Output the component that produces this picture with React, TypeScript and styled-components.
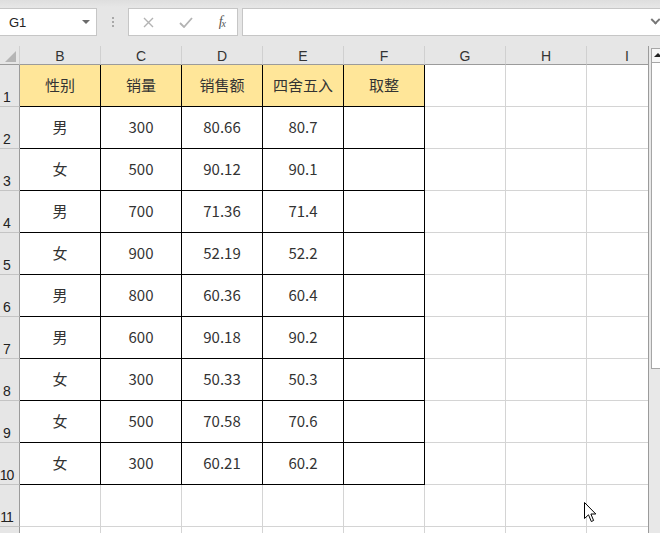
import styled, { createGlobalStyle } from "styled-components";

const GlobalStyle = createGlobalStyle`
  html, body {
    margin: 0;
    padding: 0;
    background: #ffffff;
    overflow: hidden;
  }
  body {
    font-family: "Noto Sans CJK SC", "Noto Sans", sans-serif;
  }
`;

const COLS = ["B", "C", "D", "E", "F", "G", "H", "I"];
const HEADERS = ["性别", "销量", "销售额", "四舍五入", "取整"];
const DATA = [
  ["男", "300", "80.66", "80.7"],
  ["女", "500", "90.12", "90.1"],
  ["男", "700", "71.36", "71.4"],
  ["女", "900", "52.19", "52.2"],
  ["男", "800", "60.36", "60.4"],
  ["男", "600", "90.18", "90.2"],
  ["女", "300", "50.33", "50.3"],
  ["女", "500", "70.58", "70.6"],
  ["女", "300", "60.21", "60.2"],
];

const Window = styled.div`
  position: relative;
  width: 660px;
  height: 533px;
  overflow: hidden;
  background: #e6e6e6;
`;

const FormulaBar = styled.div`
  height: 46px;
  display: flex;
  align-items: flex-start;
  padding-top: 8px;
  box-sizing: border-box;
  background: linear-gradient(#dedede 0px, #e6e6e6 7px);
`;

const NameBox = styled.div`
  width: 97px;
  height: 28px;
  box-sizing: border-box;
  background: #fff;
  border: 1px solid #c6c6c6;
  border-left: none;
  display: flex;
  align-items: center;
  justify-content: space-between;
  padding: 0 6px 0 9px;
  font-family: "Liberation Sans", sans-serif;
  font-size: 13px;
  color: #222;
`;

const Caret = styled.span`
  width: 0;
  height: 0;
  border-left: 4px solid transparent;
  border-right: 4px solid transparent;
  border-top: 4px solid #6b6b6b;
`;

const Grip = styled.div`
  width: 31px;
  height: 28px;
  display: flex;
  flex-direction: column;
  align-items: center;
  justify-content: center;
  gap: 2px;
  span {
    width: 2px;
    height: 2px;
    background: #a8a8a8;
  }
`;

const ButtonBox = styled.div`
  width: 110px;
  height: 28px;
  box-sizing: border-box;
  background: #fff;
  border: 1px solid #c6c6c6;
  display: flex;
  align-items: center;
  padding: 0 12px 0 14px;
  justify-content: space-between;
`;

const Fx = styled.span`
  font-family: "Liberation Serif", serif;
  font-style: italic;
  font-size: 14px;
  color: #555;
  letter-spacing: -1px;
  sub {
    font-size: 10px;
    vertical-align: -1px;
  }
`;

const Input = styled.div`
  flex: 1;
  margin-left: 4px;
  height: 28px;
  box-sizing: border-box;
  background: #fff;
  border: 1px solid #c6c6c6;
  border-right: none;
  display: flex;
  align-items: center;
  justify-content: flex-end;
  padding-right: 1px;
`;

const Chevron = styled.span`
  width: 5px;
  height: 5px;
  border-right: 2px solid #777;
  border-bottom: 2px solid #777;
  transform: rotate(45deg) translate(-2px, -2px);
`;

const Sheet = styled.div`
  display: flex;
  height: 487px;
`;

const Grid = styled.div`
  display: grid;
  grid-template-columns: 20px repeat(8, 81px);
  grid-template-rows: 19px repeat(12, 42px);
  width: 648px;
  flex: none;
  overflow: hidden;
  background: #fff;
  border-right: 1px solid #9b9b9b;
  align-content: start;
`;

const Corner = styled.div`
  background: #e6e6e6;
  border-right: 1px solid #d0d0d0;
  border-bottom: 1px solid #9b9b9b;
  box-sizing: border-box;
  position: relative;
  &::after {
    content: "";
    position: absolute;
    right: 3px;
    bottom: 2px;
    border-left: 11px solid transparent;
    border-bottom: 11px solid #b5b5b5;
  }
`;

const ColHead = styled.div`
  background: #e6e6e6;
  border-right: 1px solid #d0d0d0;
  border-bottom: 1px solid #9b9b9b;
  box-sizing: border-box;
  display: flex;
  align-items: flex-end;
  justify-content: center;
  font-family: "Liberation Sans", sans-serif;
  font-size: 14px;
  line-height: 16px;
  color: #333;
`;

const RowHead = styled.div`
  background: #e6e6e6;
  border-right: 1px solid #9b9b9b;
  border-bottom: 1px solid #c4c4c4;
  box-sizing: border-box;
  display: flex;
  align-items: flex-end;
  justify-content: center;
  padding-right: 6px;
  overflow: visible;
  white-space: nowrap;
  font-family: "Liberation Sans", sans-serif;
  font-size: 14px;
  letter-spacing: -1px;
  line-height: 18px;
  color: #222;
`;

const Cell = styled.div<{ $kind: "head" | "data" | "empty" }>`
  box-sizing: border-box;
  background: ${(p) => (p.$kind === "head" ? "#ffe699" : "#ffffff")};
  border-right: 1px solid ${(p) => (p.$kind === "empty" ? "#d4d4d4" : "#000")};
  border-bottom: 1px solid ${(p) => (p.$kind === "empty" ? "#d4d4d4" : "#000")};
  display: flex;
  align-items: center;
  justify-content: center;
  font-family: "Noto Sans CJK SC", sans-serif;
  font-size: 15px;
  color: #333;
  padding-bottom: 2px;
`;

const Scrollbar = styled.div`
  flex: 1;
  background: #e8e8e8;
  padding: 2px 0 0 2px;
  display: flex;
  flex-direction: column;
`;

const ScrollButton = styled.div`
  height: 15px;
  box-sizing: border-box;
  background: #f7f7f7;
  border: 1px solid #a6a6a6;
  border-right: none;
  position: relative;
  &::after {
    content: "";
    position: absolute;
    left: 2px;
    top: 4px;
    border-left: 4px solid transparent;
    border-right: 4px solid transparent;
    border-bottom: 4px solid #222;
  }
`;

const Thumb = styled.div`
  height: 306px;
  box-sizing: border-box;
  background: #ffffff;
  border: 1px solid #a6a6a6;
  border-right: none;
  border-top: none;
`;

const Pointer = styled.svg`
  position: absolute;
  left: 584px;
  top: 502px;
`;

function FormulaRow() {
  return (
    <FormulaBar>
      <NameBox>
        G1
        <Caret />
      </NameBox>
      <Grip>
        <span />
        <span />
        <span />
      </Grip>
      <ButtonBox>
        <svg width="11" height="11" viewBox="0 0 11 11">
          <path d="M1 1 L10 10 M10 1 L1 10" stroke="#b3b3b3" strokeWidth="1.4" />
        </svg>
        <svg width="14" height="11" viewBox="0 0 14 11">
          <path d="M1 6 L5 10 L13 1" stroke="#b3b3b3" strokeWidth="1.8" fill="none" />
        </svg>
        <Fx>
          f<sub>x</sub>
        </Fx>
      </ButtonBox>
      <Input>
        <Chevron />
      </Input>
    </FormulaBar>
  );
}

export default function App() {
  const bodyRows: React.ReactNode[] = [];
  for (let r = 1; r <= 12; r++) {
    // row 12 only peeks in at the bottom edge, its number is below the fold
    bodyRows.push(<RowHead key={`rh${r}`}>{r < 12 ? r : ""}</RowHead>);
    COLS.forEach((c, i) => {
      if (r === 1 && i < 5) {
        bodyRows.push(
          <Cell key={`${c}${r}`} $kind="head">
            {HEADERS[i]}
          </Cell>
        );
      } else if (r >= 2 && r <= 10 && i < 5) {
        bodyRows.push(
          <Cell key={`${c}${r}`} $kind="data">
            {DATA[r - 2][i] ?? ""}
          </Cell>
        );
      } else {
        bodyRows.push(<Cell key={`${c}${r}`} $kind="empty" />);
      }
    });
  }

  return (
    <>
      <GlobalStyle />
      <Window>
        <FormulaRow />
        <Sheet>
          <Grid>
            <Corner />
            {COLS.map((c) => (
              <ColHead key={c}>{c}</ColHead>
            ))}
            {bodyRows}
          </Grid>
          <Scrollbar>
            <ScrollButton />
            <Thumb />
          </Scrollbar>
        </Sheet>
        <Pointer width="14" height="22" viewBox="0 0 14 22">
          <path
            d="M0.5 0.5 L0.5 16.5 L4.5 12.8 L7.3 19.5 L9.6 18.5 L6.9 12 L11.8 12 Z"
            fill="#fff"
            stroke="#000"
            strokeWidth="1"
          />
        </Pointer>
      </Window>
    </>
  );
}
